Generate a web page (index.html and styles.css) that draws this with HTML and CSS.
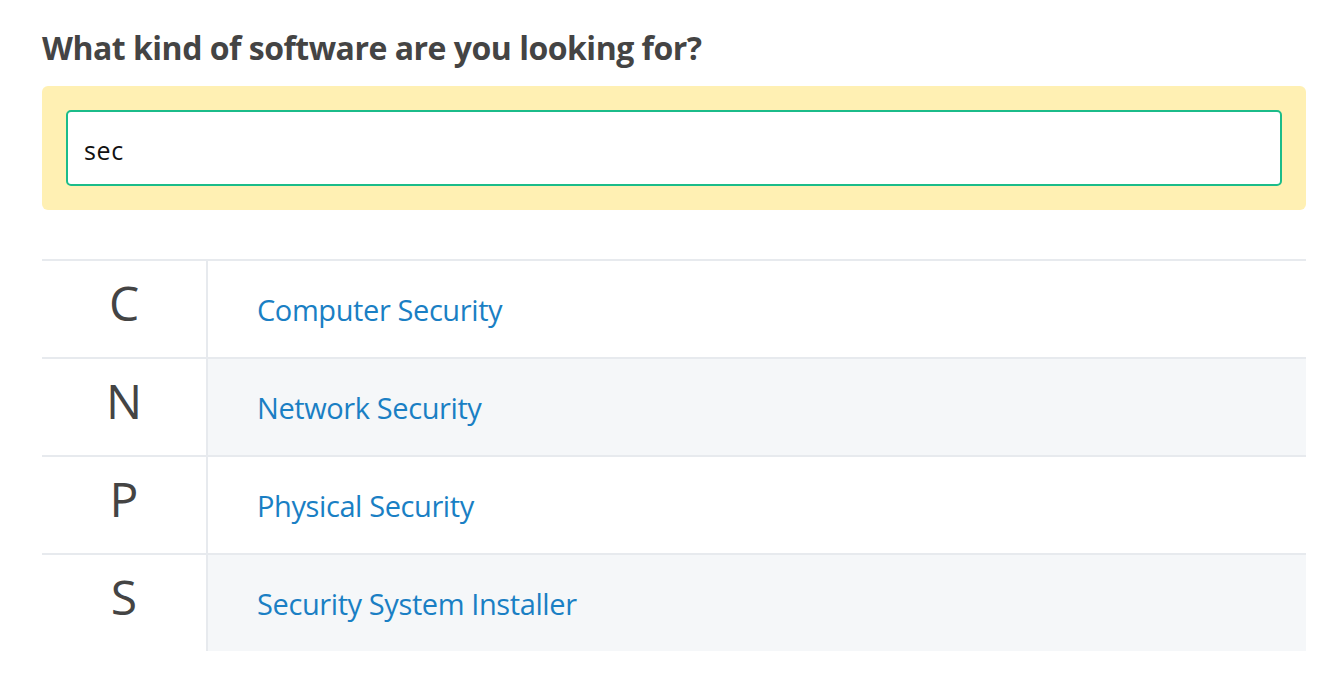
FILE: index.html
```html
<!DOCTYPE html>
<html>
<head>
<meta charset="utf-8">
<link rel="stylesheet" href="styles.css">
</head>
<body>
<main class="page">
  <h1 class="title">What kind of software are you looking for?</h1>
  <div class="search-box">
    <div class="search-input">sec</div>
  </div>
  <div class="results">
    <div class="row">
      <div class="letter">C</div>
      <div class="item"><a class="link">Computer Security</a></div>
    </div>
    <div class="row alt">
      <div class="letter">N</div>
      <div class="item"><a class="link">Network Security</a></div>
    </div>
    <div class="row">
      <div class="letter">P</div>
      <div class="item"><a class="link">Physical Security</a></div>
    </div>
    <div class="row alt last">
      <div class="letter">S</div>
      <div class="item"><a class="link">Security System Installer</a></div>
    </div>
  </div>
</main>
</body>
</html>
```

FILE: styles.css
```css
html, body {
  margin: 0;
  padding: 0;
  background: #ffffff;
}
body {
  font-family: "Open Sans", "Noto Sans", sans-serif;
  color: #444444;
}
.page {
  padding: 0 26px 0 42px;
}
.title {
  margin: 0 0 18px 0;
  padding-top: 28px;
  font-size: 32px;
  font-weight: 700;
  line-height: 40px;
  color: #444444;
  letter-spacing: -0.5px;
}
.search-box {
  background: #fff0b3;
  border-radius: 6px;
  padding: 24px;
  height: 124px;
  box-sizing: border-box;
}
.search-input {
  height: 76px;
  box-sizing: border-box;
  border: 2px solid #1bbc8a;
  border-radius: 5px;
  background: #ffffff;
  padding: 4px 16px 0 16px;
  display: flex;
  align-items: center;
  font-size: 25px;
  color: #111111;
  letter-spacing: 0.6px;
}
.results {
  margin-top: 49px;
  border-top: 2px solid #e7eaee;
}
.row {
  display: grid;
  grid-template-columns: 166px 1fr;
  height: 98px;
  border-bottom: 2px solid #e7eaee;
  box-sizing: border-box;
}
.row.last {
  border-bottom: none;
  height: 96px;
}
.letter {
  display: flex;
  align-items: center;
  justify-content: center;
  font-size: 48px;
  color: #444444;
  border-right: 2px solid #e7eaee;
  padding-bottom: 14px;
}
.item {
  display: flex;
  align-items: center;
  padding-left: 49px;
}
.row.alt .item {
  background: #f5f7f9;
}
.link {
  font-size: 29px;
  font-weight: 500;
  color: #1a7fc4;
  letter-spacing: -0.4px;
  text-decoration: none;
}
```
